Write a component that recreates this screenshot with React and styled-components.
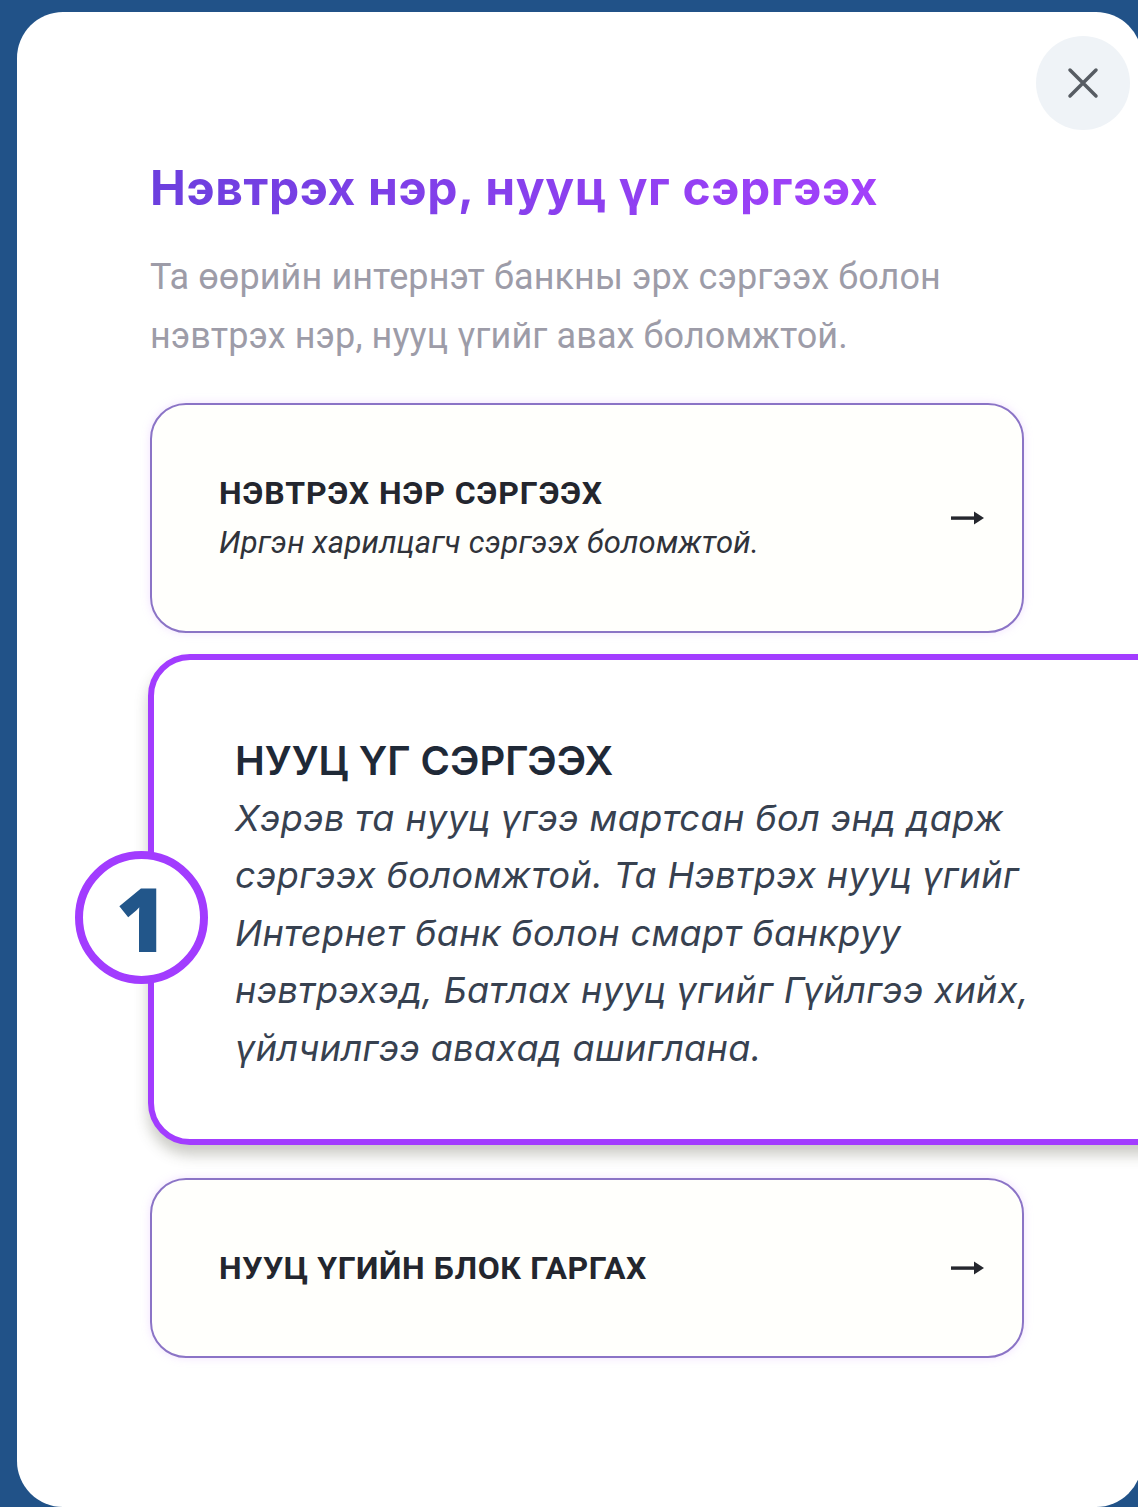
import React from "react";
import styled, { createGlobalStyle } from "styled-components";

const Global = createGlobalStyle`
  html, body {
    margin: 0;
    padding: 0;
    background: #215288;
    overflow: hidden;
  }
  * { box-sizing: border-box; }
`;

const Screen = styled.div`
  width: 1138px;
  height: 1507px;
  padding: 12px 0 0 17px;
  overflow: hidden;
  font-family: Roboto, "Liberation Sans", sans-serif;
`;

const Modal = styled.div`
  position: relative;
  width: 1125px;
  height: 1495px;
  background: #ffffff;
  border-radius: 46px;
  padding: 148px 0 0 133px;
`;

const CloseButton = styled.button`
  position: absolute;
  top: 24px;
  right: 12px;
  width: 94px;
  height: 94px;
  border: none;
  border-radius: 50%;
  background: #eff3f7;
  display: flex;
  align-items: center;
  justify-content: center;
  padding: 0;
`;

const Column = styled.div`
  width: 874px;
  display: flex;
  flex-direction: column;
`;

const Title = styled.h1`
  margin: 0;
  font-family: Inter, Roboto, sans-serif;
  font-size: 48px;
  line-height: 56px;
  font-weight: 700;
  letter-spacing: 0.6px;
  background: linear-gradient(90deg, #6c3fde 0%, #8a40ee 55%, #a341fb 100%);
  -webkit-background-clip: text;
  background-clip: text;
  color: transparent;
  width: fit-content;
`;

const Lead = styled.p`
  margin: 32px 0 0 0;
  font-size: 36px;
  line-height: 59px;
  color: #9d9ca8;
  letter-spacing: 0.1px;
`;

const Options = styled.div`
  margin-top: 37px;
  display: flex;
  flex-direction: column;
`;

const OptionCard = styled.div`
  display: flex;
  align-items: center;
  justify-content: space-between;
  height: ${(p) => p.$h}px;
  margin-top: ${(p) => p.$gap || 0}px;
  padding: 0 38px 0 67px;
  background: #fffffc;
  border: 2px solid #8b74c6;
  border-radius: 36px;
  box-shadow: 0 0 8px rgba(214, 170, 255, 0.35);
`;

const OptionText = styled.div`
  display: flex;
  flex-direction: column;
  margin-top: ${(p) => p.$shift || 0}px;
`;

const OptionTitle = styled.div`
  font-size: 32px;
  line-height: 44px;
  font-weight: 700;
  color: #23262e;
  letter-spacing: ${(p) => p.$track ?? 0.95}px;
`;

const OptionNote = styled.div`
  font-size: 31px;
  line-height: 56px;
  font-style: italic;
  color: #30333a;
  letter-spacing: 0.25px;
`;

const FocusCard = styled.div`
  position: relative;
  width: 1140px;
  margin: 21px 0 0 -2px;
  padding: 76px 60px 62px 81px;
  background: #ffffff;
  border: 6px solid #a23cff;
  border-radius: 42px;
  box-shadow: 0 10px 14px rgba(70, 70, 50, 0.28);
  font-family: Inter, "Noto Sans", sans-serif;
`;

const FocusTitle = styled.div`
  font-size: 40px;
  line-height: 50px;
  font-weight: 600;
  color: #1f2937;
`;

const FocusBody = styled.div`
  margin-top: 4px;
  font-size: 36px;
  line-height: 57.4px;
  font-style: italic;
  color: #374150;
  letter-spacing: 0.4px;
`;

const StepBadge = styled.div`
  position: absolute;
  left: -79px;
  top: 191px;
  width: 133px;
  height: 133px;
  border-radius: 50%;
  border: 8px solid #a23cff;
  background: #ffffff;
  display: flex;
  align-items: center;
  justify-content: center;
  font-family: "Open Sans", Inter, sans-serif;
  font-size: 88px;
  font-weight: 800;
  color: #22568a;
  line-height: 1;
`;

const CloseIcon = () => (
  <svg width="32" height="32" viewBox="0 0 32 32">
    <path
      d="M3 3 L29 29 M29 3 L3 29"
      stroke="#575c63"
      strokeWidth="3.5"
      strokeLinecap="round"
    />
  </svg>
);

const ArrowIcon = () => (
  <svg width="33" height="14" viewBox="0 0 33 14">
    <rect x="0" y="5.4" width="26" height="3.4" fill="#25272d" />
    <polygon points="23,0.5 33,7 23,13.5" fill="#25272d" />
  </svg>
);

export default function App() {
  return (
    <>
      <Global />
      <Screen>
        <Modal>
          <CloseButton aria-label="Хаах">
            <CloseIcon />
          </CloseButton>
          <Column>
            <Title>Нэвтрэх нэр, нууц үг сэргээх</Title>
            <Lead>
              Та өөрийн интернэт банкны эрх сэргээх болон
              <br />
              нэвтрэх нэр, нууц үгийг авах боломжтой.
            </Lead>
            <Options>
              <OptionCard $h={230}>
                <OptionText $shift={6}>
                  <OptionTitle>НЭВТРЭХ НЭР СЭРГЭЭХ</OptionTitle>
                  <OptionNote>Иргэн харилцагч сэргээх боломжтой.</OptionNote>
                </OptionText>
                <ArrowIcon />
              </OptionCard>

              <FocusCard>
                <StepBadge>1</StepBadge>
                <FocusTitle>НУУЦ ҮГ СЭРГЭЭХ</FocusTitle>
                <FocusBody>
                  Хэрэв та нууц үгээ мартсан бол энд дарж
                  <br />
                  сэргээх боломжтой. Та Нэвтрэх нууц үгийг
                  <br />
                  Интернет банк болон смарт банкруу
                  <br />
                  нэвтрэхэд, Батлах нууц үгийг Гүйлгээ хийх,
                  <br />
                  үйлчилгээ авахад ашиглана.
                </FocusBody>
              </FocusCard>

              <OptionCard $h={180} $gap={33}>
                <OptionText>
                  <OptionTitle $track={0.6}>НУУЦ ҮГИЙН БЛОК ГАРГАХ</OptionTitle>
                </OptionText>
                <ArrowIcon />
              </OptionCard>
            </Options>
          </Column>
        </Modal>
      </Screen>
    </>
  );
}
